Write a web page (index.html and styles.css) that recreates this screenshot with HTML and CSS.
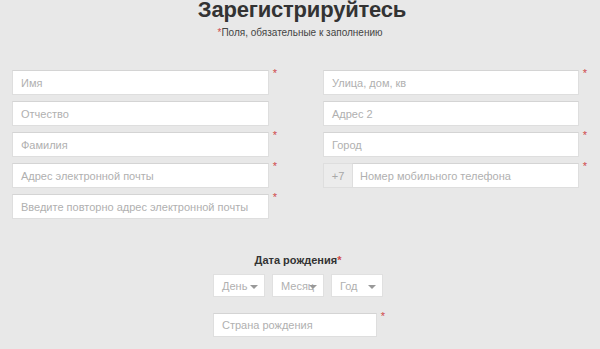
FILE: index.html
```html
<!DOCTYPE html>
<html lang="ru">
<head>
<meta charset="utf-8">
<title>Регистрация</title>
<link rel="stylesheet" href="styles.css">
</head>
<body>
<h1 class="title">Зарегистрируйтесь</h1>
<p class="note"><span class="req">*</span>Поля, обязательные к заполнению</p>
<div class="grid">
  <div class="col">
    <div class="field"><div class="input"><span class="ph">Имя</span></div><span class="star">*</span></div>
    <div class="field"><div class="input"><span class="ph">Отчество</span></div></div>
    <div class="field"><div class="input"><span class="ph">Фамилия</span></div><span class="star">*</span></div>
    <div class="field"><div class="input"><span class="ph">Адрес электронной почты</span></div><span class="star">*</span></div>
    <div class="field"><div class="input"><span class="ph">Введите повторно адрес электронной почты</span></div><span class="star">*</span></div>
  </div>
  <div class="col">
    <div class="field"><div class="input"><span class="ph">Улица, дом, кв</span></div><span class="star">*</span></div>
    <div class="field"><div class="input"><span class="ph">Адрес 2</span></div></div>
    <div class="field"><div class="input"><span class="ph">Город</span></div><span class="star">*</span></div>
    <div class="field phone"><div class="prefix">+7</div><div class="input"><span class="ph">Номер мобильного телефона</span></div><span class="star">*</span></div>
  </div>
</div>
<div class="dob">
  <div class="dob-label">Дата рождения<span class="req">*</span></div>
  <div class="selects">
    <div class="select"><span class="ph">День</span><span class="arrow"></span></div>
    <div class="select"><span class="ph">Месяц</span><span class="arrow"></span></div>
    <div class="select"><span class="ph">Год</span><span class="arrow"></span></div>
  </div>
  <div class="field country"><div class="input"><span class="ph">Страна рождения</span></div><span class="star">*</span></div>
</div>
</body>
</html>
```
FILE: styles.css
```css
html, body {
  margin: 0;
  padding: 0;
}
body {
  background: #e8e8e8;
  font-family: "Liberation Sans", Arial, sans-serif;
  color: #333;
  width: 600px;
  height: 349px;
  overflow: hidden;
}
.title {
  margin: 0;
  font-size: 22px;
  line-height: 20px;
  font-weight: bold;
  text-align: center;
  color: #333;
  letter-spacing: -0.2px;
  padding-left: 4px;
}
.note {
  margin: 7px 0 0;
  font-size: 10px;
  line-height: 12px;
  text-align: center;
  color: #444;
}
.req {
  color: #d04a4a;
}
.grid {
  margin-top: 31px;
  padding-left: 12px;
  display: grid;
  grid-template-columns: 257px 256px;
  column-gap: 54px;
}
.col {
  display: flex;
  flex-direction: column;
  gap: 6px;
}
.field {
  position: relative;
  display: flex;
  height: 25px;
}
.input {
  flex: 1;
  background: #fff;
  border: 1px solid #dedede;
  border-top-color: #d4d4d4;
  box-sizing: border-box;
  display: flex;
  align-items: center;
  padding-left: 8px;
}
.ph {
  font-size: 11px;
  color: #b0b0b0;
  white-space: nowrap;
}
.star {
  position: absolute;
  right: -8px;
  top: -2px;
  font-size: 11px;
  line-height: 11px;
  color: #d04a4a;
}
.prefix {
  width: 29px;
  background: #ececec;
  border: 1px solid #dedede;
  border-right: none;
  box-sizing: border-box;
  display: flex;
  align-items: center;
  justify-content: center;
  font-size: 11px;
  color: #a8a8a8;
}
.phone .input {
  padding-left: 7px;
}
.dob {
  width: 170px;
  margin: 35px auto 0;
  padding-right: 4px;
}
.dob-label {
  font-size: 11px;
  line-height: 13px;
  font-weight: bold;
  text-align: center;
  color: #333;
}
.selects {
  margin-top: 7px;
  display: flex;
  gap: 7px;
}
.select {
  width: 52px;
  height: 23px;
  box-sizing: border-box;
  background: #fff;
  border: 1px solid #e0e0e0;
  position: relative;
  display: flex;
  align-items: center;
  padding-left: 8px;
}
.arrow {
  position: absolute;
  right: 6px;
  top: 10px;
  width: 0;
  height: 0;
  border-left: 4px solid transparent;
  border-right: 4px solid transparent;
  border-top: 4px solid #999;
}
.country {
  margin-top: 16px;
  width: 164px;
  height: 24px;
}
```
